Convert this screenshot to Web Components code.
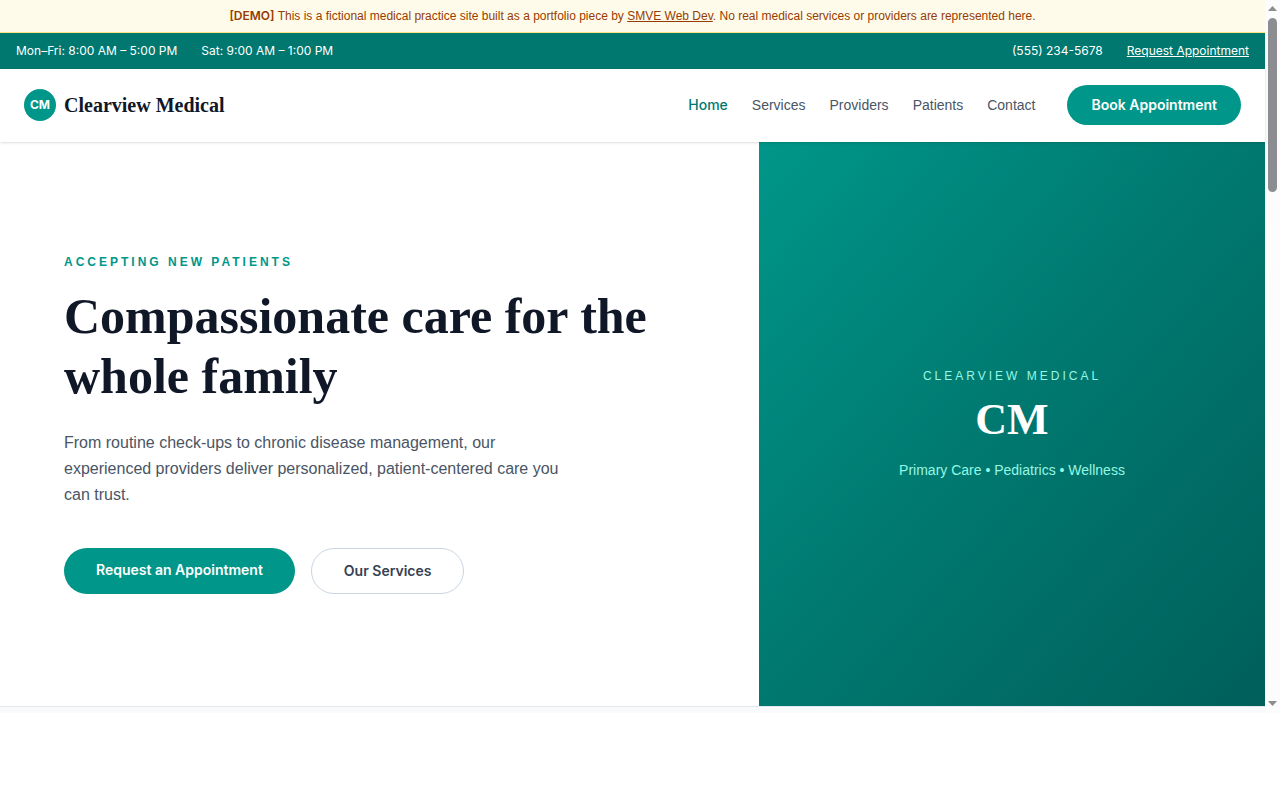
<!DOCTYPE html>
<html lang="en">
<head>
<meta charset="utf-8">
<meta name="viewport" content="width=device-width, initial-scale=1">
<title>Clearview Medical</title>
<style>
    :root {
        --teal-200: #96f7e4;
        --teal-600: #009689;
        --teal-700: #00786f;
        --teal-800: #005f5a;
        --ink: #101828;
        --text: #4a5565;
        --line: #e2e8f0;
        --sans: "Liberation Sans", Arial, sans-serif;
        --strong: Inter, "Liberation Sans", sans-serif;
        --serif: "Liberation Serif", "Times New Roman", serif;
    }
    body {
        margin: 0;
        background: #fff;
        color: var(--text);
        font: 14px/20px var(--sans);
    }
</style>
</head>
<body>
<page-frame>
    <demo-banner>
        <strong>[DEMO]</strong> This is a fictional medical practice site built as a portfolio piece by <a href="#smve">SMVE Web Dev</a>. No real medical services or providers are represented here.
    </demo-banner>
    <top-bar>
        <span slot="hours">Mon–Fri: 8:00 AM – 5:00 PM</span>
        <span slot="hours">Sat: 9:00 AM – 1:00 PM</span>
        <a slot="contact" href="tel:5552345678">(555) 234-5678</a>
        <a slot="contact" class="underlined" href="#request">Request Appointment</a>
    </top-bar>
    <site-header>
        <a slot="nav" href="#home" aria-current="page">Home</a>
        <a slot="nav" href="#services">Services</a>
        <a slot="nav" href="#providers">Providers</a>
        <a slot="nav" href="#patients">Patients</a>
        <a slot="nav" href="#contact">Contact</a>
        <pill-link slot="action" href="#book" size="small">Book Appointment</pill-link>
    </site-header>
    <site-hero>
        <span slot="eyebrow">ACCEPTING NEW PATIENTS</span>
        <span slot="title">Compassionate care for the whole family</span>
        <span slot="lead">From routine check-ups to chronic disease management, our experienced providers deliver personalized, patient-centered care you can trust.</span>
        <pill-link slot="actions" href="#request">Request an Appointment</pill-link>
        <pill-link slot="actions" href="#services" variant="outline">Our Services</pill-link>
        <brand-panel slot="panel"></brand-panel>
    </site-hero>
</page-frame>

<script>
/* Attaches an open shadow root to the element and fills it with the given markup. */
function render(element, html) {
    element.attachShadow({mode: "open"}).innerHTML = html;
}

/* Page column with the scroll bar at its right side. */
class PageFrame extends HTMLElement {
    constructor() {
        super();
        render(this, `
            <style>
                :host { display: grid; grid-template-columns: minmax(0, 1fr) 15px; }
                .next { height: 6px; background: #f8fafc; border-top: 1px solid var(--line); }
            </style>
            <div><slot></slot><div class="next"></div></div>
            <scroll-rail></scroll-rail>
        `);
    }
}

class ScrollRail extends HTMLElement {
    constructor() {
        super();
        render(this, `
            <style>
                :host {
                    display: flex;
                    flex-direction: column;
                    align-items: center;
                    justify-content: space-between;
                    background: #fcfcfc;
                }
                .top { display: flex; flex-direction: column; align-items: center; gap: 7px; flex: 1; padding-top: 6px; }
                .thumb { width: 9px; height: 25%; border-radius: 5px; background: #8b8d91; }
                svg { display: block; fill: #8b8d91; }
                .down { padding-bottom: 7px; }
            </style>
            <div class="top">
                <svg width="9" height="5" viewBox="0 0 9 5"><path d="M0 5 4.5 0 9 5z"/></svg>
                <div class="thumb"></div>
            </div>
            <svg class="down" width="9" height="5" viewBox="0 0 9 5"><path d="M0 0h9L4.5 5z"/></svg>
        `);
    }
}

class DemoBanner extends HTMLElement {
    constructor() {
        super();
        render(this, `
            <style>
                :host {
                    display: block;
                    padding: 8px 16px;
                    border-bottom: 1px solid #fee685;
                    background: #fffbeb;
                    color: #973c00;
                    font-size: 12px;
                    line-height: 16px;
                    text-align: center;
                }
                ::slotted(strong) { font-family: var(--strong); font-weight: 600; }
                ::slotted(a) { color: inherit; }
            </style>
            <slot></slot>
        `);
    }
}

class TopBar extends HTMLElement {
    constructor() {
        super();
        render(this, `
            <style>
                :host {
                    display: flex;
                    justify-content: space-between;
                    padding: 10px 16px;
                    background: var(--teal-700);
                    color: #fff;
                    font: 12px/16px var(--strong);
                }
                div { display: flex; gap: 24px; }
                ::slotted(a) { color: inherit; text-decoration: none; }
                ::slotted(.underlined) { text-decoration: underline; }
            </style>
            <div><slot name="hours"></slot></div>
            <div><slot name="contact"></slot></div>
        `);
    }
}

class SiteHeader extends HTMLElement {
    constructor() {
        super();
        render(this, `
            <style>
                :host {
                    display: block;
                    position: relative;
                    border-bottom: 1px solid #fff;
                    box-shadow: 0 1px 3px rgba(0, 0, 0, .1), 0 1px 2px -1px rgba(0, 0, 0, .1);
                    background: #fff;
                }
                header { display: flex; align-items: center; justify-content: space-between; padding: 16px 24px; }
                .brand { display: flex; align-items: center; gap: 8px; color: var(--ink); text-decoration: none; }
                .mark {
                    display: grid;
                    place-items: center;
                    width: 32px;
                    height: 32px;
                    border-radius: 50%;
                    background: var(--teal-600);
                    color: #fff;
                    font: 700 12px/16px var(--strong);
                }
                .name { font: 700 20px/28px var(--serif); }
                .menu { display: flex; align-items: center; gap: 32px; }
                nav { display: flex; gap: 24px; }
                ::slotted(a) { color: var(--text); text-decoration: none; }
                ::slotted(a[aria-current]) { color: var(--teal-700); font-family: var(--strong); font-weight: 500; }
            </style>
            <header>
                <a class="brand" href="#home">
                    <span class="mark">CM</span>
                    <span class="name">Clearview Medical</span>
                </a>
                <div class="menu">
                    <nav><slot name="nav"></slot></nav>
                    <slot name="action"></slot>
                </div>
            </header>
        `);
    }
}

/* Rounded link button. Attributes: href, variant="outline", size="small". */
class PillLink extends HTMLElement {
    constructor() {
        super();
        render(this, `
            <style>
                :host { display: flex; }
                a {
                    padding: 12px 32px;
                    border-radius: 999px;
                    background: var(--teal-600);
                    color: #fff;
                    font-family: var(--strong);
                    font-weight: 600;
                    text-decoration: none;
                    white-space: nowrap;
                }
                :host([size="small"]) a { padding: 10px 24px; }
                :host([variant="outline"]) a {
                    border: 1px solid #cad5e2;
                    background: #fff;
                    color: #364153;
                }
            </style>
            <a><slot></slot></a>
        `);
    }

    connectedCallback() {
        this.shadowRoot.querySelector("a").href = this.getAttribute("href");
    }
}

class SiteHero extends HTMLElement {
    constructor() {
        super();
        render(this, `
            <style>
                :host { display: grid; grid-template-columns: 3fr 2fr; }
                .copy { padding: 112px 64px; }
                .eyebrow {
                    margin: 0 0 16px;
                    color: var(--teal-600);
                    font-size: 12px;
                    font-weight: 700;
                    line-height: 16px;
                    letter-spacing: 3px;
                }
                h1 { margin: 0 0 24px; color: var(--ink); font: 700 50px/60px var(--serif); }
                .lead { max-width: 512px; margin: 0 0 40px; font-size: 16px; line-height: 26px; }
                .actions { display: flex; gap: 16px; }
            </style>
            <div class="copy">
                <p class="eyebrow"><slot name="eyebrow"></slot></p>
                <h1><slot name="title"></slot></h1>
                <p class="lead"><slot name="lead"></slot></p>
                <div class="actions"><slot name="actions"></slot></div>
            </div>
            <slot name="panel"></slot>
        `);
    }
}

class BrandPanel extends HTMLElement {
    constructor() {
        super();
        render(this, `
            <style>
                :host {
                    display: flex;
                    flex-direction: column;
                    align-items: center;
                    justify-content: center;
                    background: linear-gradient(to bottom right, var(--teal-600), var(--teal-700), var(--teal-800));
                    color: var(--teal-200);
                }
                p { margin: 0; }
                .name { font-size: 12px; line-height: 16px; letter-spacing: 3px; }
                .initials { margin: 12px 0 16px; color: #fff; font: 700 44px/48px var(--serif); }
            </style>
            <p class="name">CLEARVIEW MEDICAL</p>
            <p class="initials">CM</p>
            <p>Primary Care • Pediatrics • Wellness</p>
        `);
    }
}

customElements.define("page-frame", PageFrame);
customElements.define("scroll-rail", ScrollRail);
customElements.define("demo-banner", DemoBanner);
customElements.define("top-bar", TopBar);
customElements.define("site-header", SiteHeader);
customElements.define("pill-link", PillLink);
customElements.define("site-hero", SiteHero);
customElements.define("brand-panel", BrandPanel);
</script>
</body>
</html>
